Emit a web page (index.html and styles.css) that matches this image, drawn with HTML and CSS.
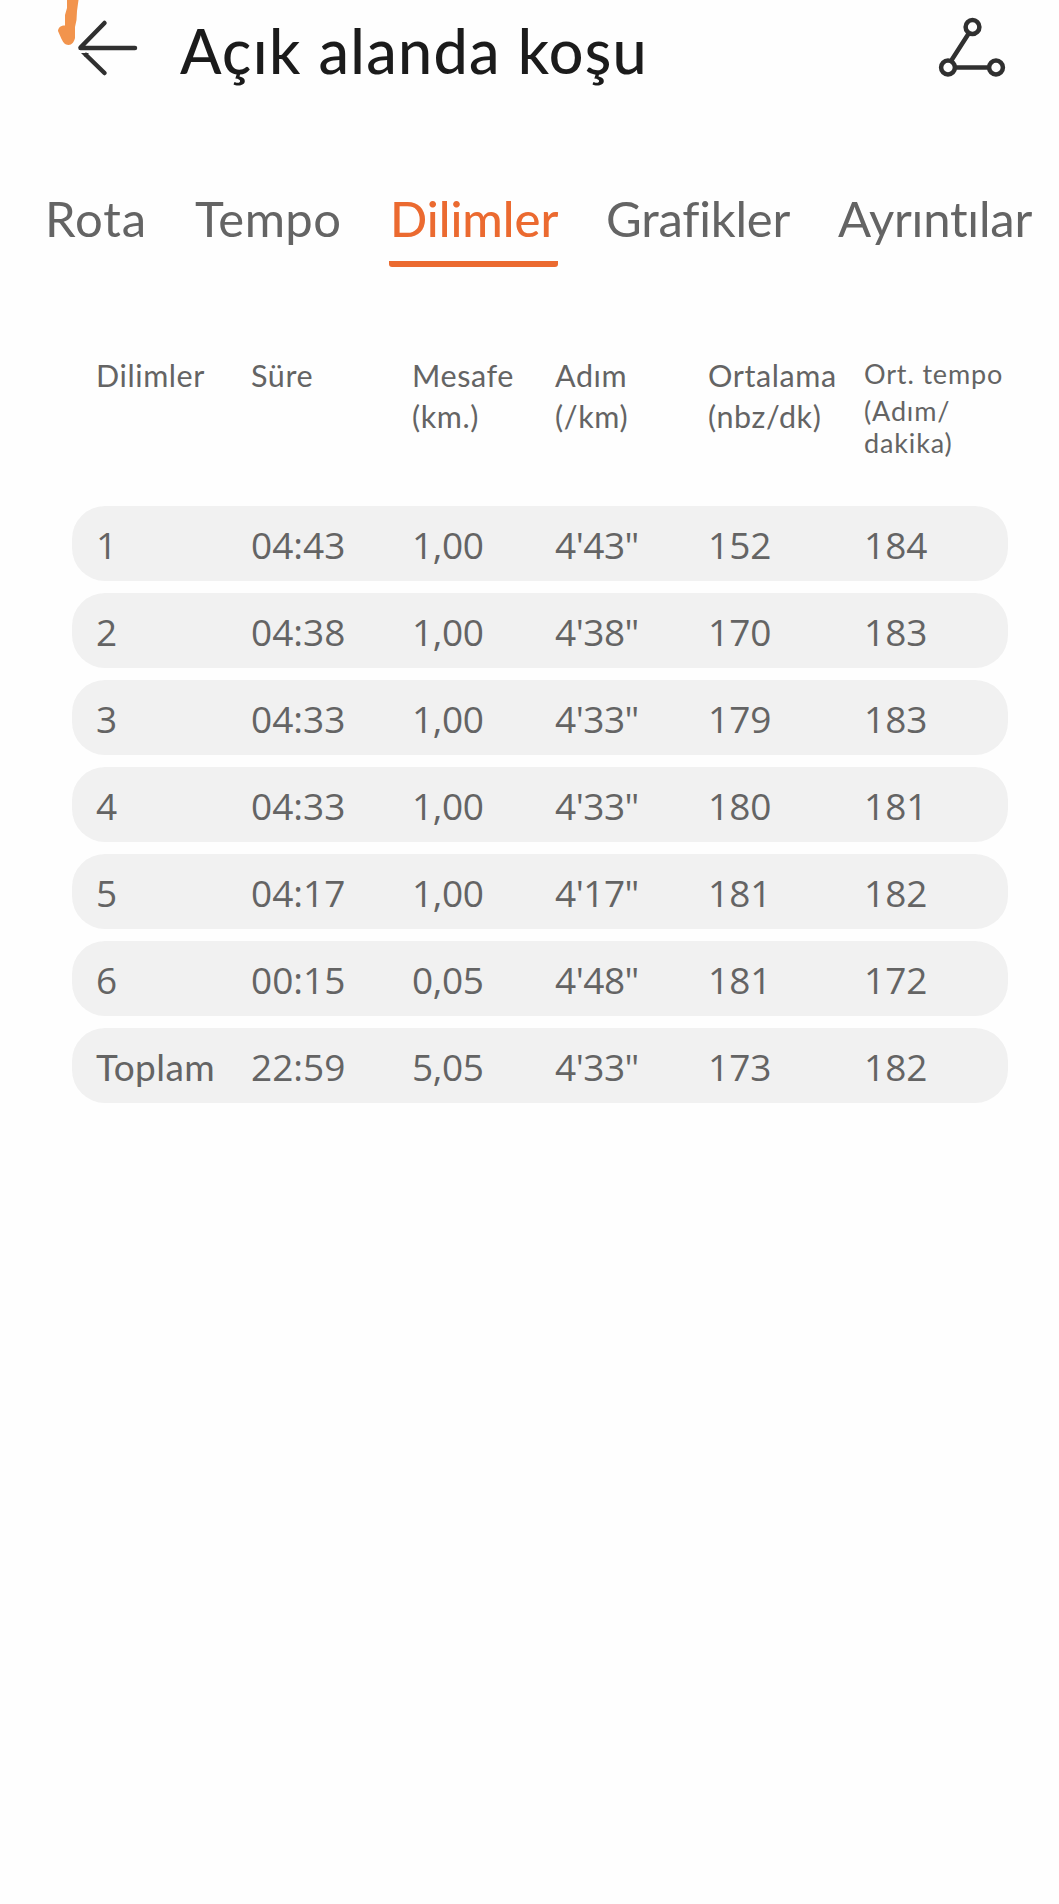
FILE: index.html
```html
<!DOCTYPE html>
<html lang="tr">
<head>
    <meta charset="UTF-8">
    <title>Açık alanda koşu</title>
    <link rel="stylesheet" href="styles.css">
</head>
<body>
    <header class="topbar">
        <svg class="back" width="90" height="90" viewBox="54 0 90 90">
            <path class="mark" d="M67 0H78.500L77 11L76.500 20L75 27V38C74 42 72 45 68.500 45C65 45 63 42 61.500 39L58 31C58.500 27 61 25.500 65 25.500V15L67 8Z"/>
            <path class="line" d="M104.500 23L80.500 47.500M80.500 48H135"/>
            <path class="line" d="M86 55L104.500 73"/>
            <path class="line-end" d="M81 53H89L85 57Z"/>
        </svg>
        <h1 class="title">Açık alanda koşu</h1>
        <svg class="share" width="70" height="70" viewBox="936 10 70 70">
            <path d="M969 33L951 61M956 67.500H988"/>
            <circle cx="972.500" cy="27" r="6.900"/>
            <circle cx="948" cy="67.500" r="6.900"/>
            <circle cx="996" cy="67.500" r="6.900"/>
        </svg>
    </header>
    <nav class="tabs">
        <a class="tab rota">Rota</a>
        <a class="tab tempo">Tempo</a>
        <a class="tab active">Dilimler</a>
        <a class="tab grafikler">Grafikler</a>
        <a class="tab ayrintilar">Ayrıntılar</a>
    </nav>
    <main class="laps">
        <div class="head">
            <span>Dilimler</span>
            <span>Süre</span>
            <span>Mesafe<br>(km.)</span>
            <span>Adım<br>(/km)</span>
            <span>Ortalama<br>(nbz/dk)</span>
            <span class="small"><span class="first">Ort. tempo</span>(Adım/<br>dakika)</span>
        </div>
        <div class="row"><span>1</span><span>04:43</span><span class="dist">1,00</span><span class="pace">4'43"</span><span>152</span><span>184</span></div>
        <div class="row"><span>2</span><span>04:38</span><span class="dist">1,00</span><span class="pace">4'38"</span><span>170</span><span>183</span></div>
        <div class="row"><span>3</span><span>04:33</span><span class="dist">1,00</span><span class="pace">4'33"</span><span>179</span><span>183</span></div>
        <div class="row"><span>4</span><span>04:33</span><span class="dist">1,00</span><span class="pace">4'33"</span><span>180</span><span>181</span></div>
        <div class="row"><span>5</span><span>04:17</span><span class="dist">1,00</span><span class="pace">4'17"</span><span>181</span><span>182</span></div>
        <div class="row"><span>6</span><span>00:15</span><span class="dist">0,05</span><span class="pace">4'48"</span><span>181</span><span>172</span></div>
        <div class="row"><span class="total">Toplam</span><span>22:59</span><span class="dist">5,05</span><span class="pace">4'33"</span><span>173</span><span>182</span></div>
    </main>
</body>
</html>
```
FILE: styles.css
```css
* {
    box-sizing: border-box;
}
body {
    margin: 0;
    min-height: 1904px;
    background-color: #fefefe;
    color: #646464;
    font-family: Lato, sans-serif;
    font-variant-ligatures: none;
}
.topbar {
    display: flex;
    height: 170px;
    padding-left: 54px;
}
.mark {
    fill: #f2944d;
}
.line {
    fill: none;
    stroke: #303030;
    stroke-width: 4.500;
    stroke-linecap: round;
}
.line-end {
    fill: #303030;
}
.title {
    width: 792px;
    margin: 0;
    padding-left: 36px;
    color: #1b1b1b;
    font-size: 61px;
    font-weight: 500;
    letter-spacing: 1.350px;
    line-height: 102px;
    white-space: nowrap;
}
.share {
    margin-top: 10px;
    fill: none;
    stroke: #303030;
    stroke-width: 4.500;
}
.tabs {
    display: grid;
    grid-template-columns: 150px 194px 217px 232px 215px;
    height: 180px;
    padding-left: 45px;
    font-size: 49px;
    line-height: 96px;
    white-space: nowrap;
}
.rota {
    letter-spacing: 0.900px;
}
.tempo {
    letter-spacing: 0.400px;
}
.grafikler {
    letter-spacing: -0.200px;
}
.ayrintilar {
    letter-spacing: -0.200px;
}
.active {
    width: 169px;
    height: 97px;
    padding-left: 1px;
    border-bottom: 6px solid transparent;
    background: linear-gradient(#eb6a30, #eb6a30) bottom / 100% 6px no-repeat border-box;
    border-radius: 3px;
    color: #eb6a30;
    font-weight: 500;
}
.laps {
    display: flex;
    flex-direction: column;
    gap: 12px;
    width: 936px;
    margin-left: 72px;
}
.head, .row {
    display: grid;
    grid-template-columns: 155px 161px 143px 153px 156px 144px;
    padding-left: 24px;
    white-space: nowrap;
}
.head {
    height: 144px;
    padding-top: 5px;
    font-size: 30.500px;
    letter-spacing: 0.600px;
    line-height: 41px;
}
.small {
    font-size: 27px;
    letter-spacing: 0.850px;
    line-height: 32px;
}
.first {
    display: block;
    height: 40px;
    line-height: 37px;
}
.row {
    height: 75px;
    border-radius: 33px;
    background-color: #f1f1f1;
    font-family: "Open Sans", sans-serif;
    font-size: 37px;
    line-height: 78px;
}
.dist {
    letter-spacing: -0.400px;
}
.pace {
    letter-spacing: -0.500px;
}
.total {
    font-family: Lato, sans-serif;
    letter-spacing: 0.400px;
}
```
